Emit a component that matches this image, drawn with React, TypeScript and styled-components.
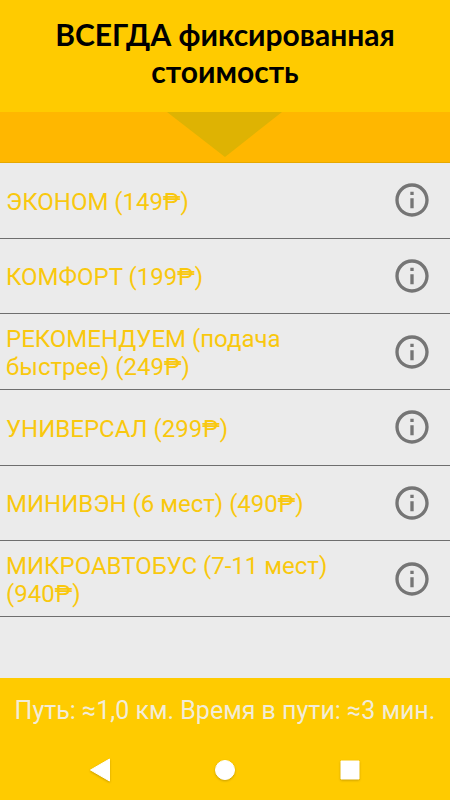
import React from 'react';
import styled, { createGlobalStyle } from 'styled-components';

const GlobalStyle = createGlobalStyle`
  * {
    box-sizing: border-box;
  }

  body {
    margin: 0;
    background-color: #ebebeb;
    font-family: Roboto, 'Noto Sans', sans-serif;
  }

  button {
    border: none;
    padding: 0;
    background: none;
    font: inherit;
    color: inherit;
    cursor: pointer;
  }
`;

const Page = styled.div`
  display: flex;
  flex-direction: column;
  min-height: 100vh;
`;

const Header = styled.header`
  padding: 16px 24px 22px;
  background-color: #ffcb00;
`;

const Title = styled.h1`
  margin: 0;
  font-family: Lato, 'Noto Sans', sans-serif;
  font-size: 30px;
  font-weight: 700;
  line-height: 37px;
  text-align: center;
  color: #000;
`;

const ArrowBand = styled.div`
  display: flex;
  justify-content: center;
  padding-bottom: 5px;
  border-bottom: 1px solid #e6a800;
  background-color: #ffb700;
`;

const ArrowDown = styled.svg`
  display: block;
  width: 116px;
  height: 45px;
  fill: #deb303;
`;

const Content = styled.main`
  flex: 1;
`;

const TariffList = styled.ul`
  display: grid;
  grid-auto-rows: 1fr;
  min-height: 454px;
  margin: 0;
  padding: 0;
  list-style: none;
`;

const TariffItem = styled.li`
  display: flex;
  align-items: center;
  border-bottom: 1px solid #6e6e6e;
`;

const TariffButton = styled.button`
  flex: 1;
  align-self: stretch;
  padding: 3px 28px 0 6px;
  font-size: 24px;
  line-height: 28px;
  text-align: left;
  color: #f9c80e;
`;

const InfoButton = styled.button`
  flex: none;
  width: 76px;
  height: 60px;
  color: #757575;

  svg {
    display: block;
    width: 40px;
    height: 40px;
    margin: 0 auto;
    fill: currentColor;
  }
`;

const Footer = styled.footer`
  background-color: #ffcb00;
`;

const RouteSummary = styled.p`
  margin: 0;
  padding: 19px 8px 18px;
  font-size: 25px;
  line-height: 28px;
  text-align: center;
  color: #f2ecd8;
`;

const NavBar = styled.nav`
  display: flex;
  justify-content: center;
  gap: 77px;
  padding-bottom: 3px;
`;

const NavButton = styled.button`
  width: 48px;
  height: 54px;

  svg {
    display: block;
    width: 24px;
    height: 24px;
    margin: 0 auto;
    fill: #fff;
    stroke: #fff;
    stroke-linejoin: round;
    overflow: visible;
    filter: drop-shadow(0 1px 1px rgba(120, 90, 0, 0.4));
  }
`;

interface Tariff {
  name: string;
  price: number;
}

const tariffs: Tariff[] = [
  { name: 'ЭКОНОМ', price: 149 },
  { name: 'КОМФОРТ', price: 199 },
  { name: 'РЕКОМЕНДУЕМ (подача быстрее)', price: 249 },
  { name: 'УНИВЕРСАЛ', price: 299 },
  { name: 'МИНИВЭН (6 мест)', price: 490 },
  { name: 'МИКРОАВТОБУС (7-11 мест)', price: 940 },
];

const InfoIcon: React.FC = () => (
  <svg viewBox="0 0 24 24" aria-hidden="true">
    <path d="M11 7h2v2h-2zm0 4h2v6h-2zm1-9C6.48 2 2 6.48 2 12s4.48 10 10 10 10-4.48 10-10S17.52 2 12 2zm0 18c-4.41 0-8-3.59-8-8s3.59-8 8-8 8 3.59 8 8-3.59 8-8 8z" />
  </svg>
);

const TariffRow: React.FC<Tariff> = ({ name, price }) => (
  <TariffItem>
    <TariffButton type="button">
      {`${name} (${price}₱)`}
    </TariffButton>
    <InfoButton type="button" aria-label={name}>
      <InfoIcon />
    </InfoButton>
  </TariffItem>
);

const App: React.FC = () => {
  return (
    <>
      <GlobalStyle />
      <Page>
        <Header>
          <Title>ВСЕГДА фиксированная стоимость</Title>
        </Header>
        <ArrowBand>
          <ArrowDown viewBox="0 0 116 45" aria-hidden="true">
            <path d="M0 0h115L58 45z" />
          </ArrowDown>
        </ArrowBand>
        <Content>
          <TariffList>
            {tariffs.map((tariff) => (
              <TariffRow key={tariff.name} {...tariff} />
            ))}
          </TariffList>
        </Content>
        <Footer>
          <RouteSummary>Путь: ≈1,0 км. Время в пути: ≈3 мин.</RouteSummary>
          <NavBar>
            <NavButton type="button" aria-label="Назад">
              <svg viewBox="0 0 24 24">
                <path d="M2.5 12L21.5 1v22z" />
              </svg>
            </NavButton>
            <NavButton type="button" aria-label="Домой">
              <svg viewBox="0 0 24 24">
                <circle cx="12" cy="12" r="9.5" />
              </svg>
            </NavButton>
            <NavButton type="button" aria-label="Недавние">
              <svg viewBox="0 0 24 24">
                <path d="M3 3h18v18H3z" />
              </svg>
            </NavButton>
          </NavBar>
        </Footer>
      </Page>
    </>
  );
};

export default App;
